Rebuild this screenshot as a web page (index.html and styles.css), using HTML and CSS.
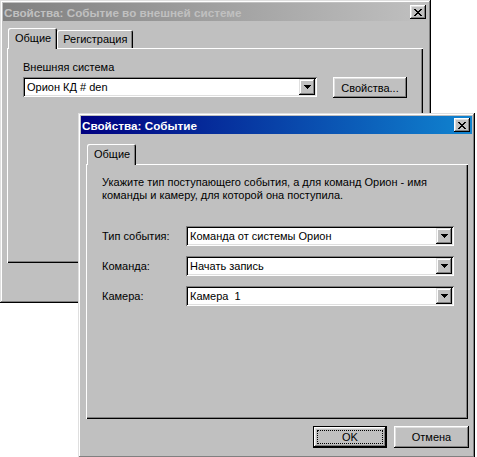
FILE: index.html
```html
<!DOCTYPE html>
<html lang="ru">
<head>
<meta charset="utf-8">
<title>Свойства: Событие</title>
<link rel="stylesheet" href="styles.css">
</head>
<body>
<div class="desktop">
  <div class="win win-back">
    <div class="titlebar inactive">
      <span class="title">Свойства: Событие во внешней системе</span>
      <span class="close"><svg width="8" height="7" viewBox="0 0 8 7" shape-rendering="crispEdges"><path d="M0 0h2v1h-2zM6 0h2v1h-2zM1 1h2v1h-2zM5 1h2v1h-2zM2 2h4v1h-4zM3 3h2v1h-2zM2 4h4v1h-4zM1 5h2v1h-2zM5 5h2v1h-2zM0 6h2v1h-2zM6 6h2v1h-2z" fill="#000"/></svg></span>
    </div>
    <div class="body back-body">
      <div class="tabs">
        <div class="tab sel">Общие</div>
        <div class="tab">Регистрация</div>
      </div>
      <div class="panel back-panel">
        <div class="lbl">Внешняя система</div>
        <div class="back-row">
          <div class="combo back-combo">
            <span class="val">Орион КД # den</span>
            <span class="arrow"><svg width="7" height="4" viewBox="0 0 7 4" shape-rendering="crispEdges"><path d="M0 0h7v1h-7zM1 1h5v1h-5zM2 2h3v1h-3zM3 3h1v1h-1z" fill="#000"/></svg></span>
          </div>
          <div class="btn props">Свойства...</div>
        </div>
      </div>
    </div>
  </div>

  <div class="win win-front">
    <div class="titlebar active">
      <span class="title">Свойства: Событие</span>
      <span class="close"><svg width="8" height="7" viewBox="0 0 8 7" shape-rendering="crispEdges"><path d="M0 0h2v1h-2zM6 0h2v1h-2zM1 1h2v1h-2zM5 1h2v1h-2zM2 2h4v1h-4zM3 3h2v1h-2zM2 4h4v1h-4zM1 5h2v1h-2zM5 5h2v1h-2zM0 6h2v1h-2zM6 6h2v1h-2z" fill="#000"/></svg></span>
    </div>
    <div class="body front-body">
      <div class="tabs front-tabs">
        <div class="tab sel">Общие</div>
      </div>
      <div class="panel front-panel">
        <p class="hint">Укажите тип поступающего события, а для команд Орион - имя<br>команды и камеру, для которой она поступила.</p>
        <div class="form">
          <div class="frow">
            <span class="flbl">Тип события:</span>
            <div class="combo fcombo">
              <span class="val">Команда от системы Орион</span>
              <span class="arrow"><svg width="7" height="4" viewBox="0 0 7 4" shape-rendering="crispEdges"><path d="M0 0h7v1h-7zM1 1h5v1h-5zM2 2h3v1h-3zM3 3h1v1h-1z" fill="#000"/></svg></span>
            </div>
          </div>
          <div class="frow">
            <span class="flbl">Команда:</span>
            <div class="combo fcombo">
              <span class="val">Начать запись</span>
              <span class="arrow"><svg width="7" height="4" viewBox="0 0 7 4" shape-rendering="crispEdges"><path d="M0 0h7v1h-7zM1 1h5v1h-5zM2 2h3v1h-3zM3 3h1v1h-1z" fill="#000"/></svg></span>
            </div>
          </div>
          <div class="frow">
            <span class="flbl">Камера:</span>
            <div class="combo fcombo">
              <span class="val">Камера&nbsp; 1</span>
              <span class="arrow"><svg width="7" height="4" viewBox="0 0 7 4" shape-rendering="crispEdges"><path d="M0 0h7v1h-7zM1 1h5v1h-5zM2 2h3v1h-3zM3 3h1v1h-1z" fill="#000"/></svg></span>
            </div>
          </div>
        </div>
      </div>
      <div class="buttons">
        <div class="btn default"><span class="focus">OK</span></div>
        <div class="btn cancel">Отмена</div>
      </div>
    </div>
  </div>
</div>
</body>
</html>
```

FILE: styles.css
```css
html, body {
  margin: 0;
  padding: 0;
  background: #fff;
}

.desktop {
  position: relative;
  width: 477px;
  height: 457px;
  overflow: hidden;
  background: #fff;
  font-family: "Liberation Sans", Arial, sans-serif;
  font-size: 11px;
  color: #000;
}

.win {
  position: absolute;
  box-sizing: border-box;
  padding: 3px;
  background: #c0c0c0;
  box-shadow: inset -1px -1px #000, inset 1px 1px #dfdfdf, inset -2px -2px #808080, inset 2px 2px #fff;
}

.win-back {
  left: 0;
  top: 0;
  width: 431px;
  height: 303px;
}

.win-front {
  left: 78px;
  top: 113px;
  width: 397px;
  height: 345px;
}

.titlebar {
  display: flex;
  align-items: center;
  height: 18px;
  padding: 0 2px 0 1px;
  font-weight: bold;
  font-size: 11.7px;
  white-space: nowrap;
}

.titlebar.active {
  background: linear-gradient(to right, #000080, #1084d0);
  color: #fff;
}

.titlebar.inactive {
  background: linear-gradient(to right, #808080, #c0c0c0);
  color: #c0c0c0;
}

.title {
  padding-left: 0;
}

.close {
  margin-left: auto;
  width: 16px;
  height: 14px;
  box-sizing: border-box;
  background: #c0c0c0;
  display: flex;
  align-items: center;
  justify-content: center;
  box-shadow: inset -1px -1px #000, inset 1px 1px #fff, inset -2px -2px #808080, inset 2px 2px #dfdfdf;
}

.close svg {
  display: block;
  margin-left: -1px;
}

.back-body {
  padding: 7px 0 0 4px;
}

.front-body {
  padding: 10px 0 0 5px;
}

.tabs {
  display: flex;
  align-items: flex-end;
  margin-left: 1px;
  margin-bottom: -1px;
  position: relative;
  z-index: 1;
  height: 21px;
}

.tab {
  box-sizing: border-box;
  height: 18px;
  margin-bottom: 1px;
  padding: 2px 6px 0 6px;
  line-height: 14px;
  background: #c0c0c0;
  border-radius: 2px 2px 0 0;
  box-shadow: inset 1px 1px #fff, inset -1px 0 #000, inset -2px 0 #808080;
}

.tab.sel {
  height: 21px;
  margin-bottom: 0;
  padding-top: 3px;
  padding-left: 7px;
  padding-right: 6px;
}

.panel {
  box-sizing: border-box;
  background: #c0c0c0;
  box-shadow: inset 1px 1px #fff, inset -1px -1px #000, inset -2px -2px #808080;
}

.back-panel {
  width: 416px;
  height: 215px;
  padding: 13px 0 0 16px;
}

.lbl {
  line-height: 13px;
  margin-bottom: 3px;
}

.back-row {
  display: flex;
  align-items: flex-start;
  gap: 16px;
}

.combo {
  display: flex;
  align-items: center;
  box-sizing: border-box;
  height: 20px;
  padding: 2px;
  background: #fff;
  box-shadow: inset 1px 1px #808080, inset -1px -1px #fff, inset 2px 2px #000, inset -2px -2px #dfdfdf;
}

.combo .val {
  flex: 1;
  padding-left: 2px;
  line-height: 16px;
  white-space: nowrap;
  overflow: hidden;
}

.combo .arrow {
  width: 16px;
  height: 16px;
  box-sizing: border-box;
  background: #c0c0c0;
  display: flex;
  align-items: center;
  justify-content: center;
  box-shadow: inset -1px -1px #000, inset 1px 1px #dfdfdf, inset -2px -2px #808080, inset 2px 2px #fff;
}

.combo .arrow svg {
  display: block;
}

.back-combo {
  width: 294px;
}

.btn {
  box-sizing: border-box;
  height: 21px;
  display: flex;
  align-items: center;
  justify-content: center;
  background: #c0c0c0;
  box-shadow: inset -1px -1px #000, inset 1px 1px #fff, inset -2px -2px #808080, inset 2px 2px #dfdfdf;
  white-space: nowrap;
}

.props {
  width: 74px;
}

.front-panel {
  width: 382px;
  height: 255px;
  padding: 12px 0 0 16px;
}

.hint {
  margin: 0;
  line-height: 13px;
}

.form {
  margin-top: 24px;
  display: flex;
  flex-direction: column;
  gap: 10px;
}

.frow {
  display: flex;
  align-items: center;
}

.flbl {
  width: 84px;
  line-height: 20px;
}

.fcombo {
  width: 268px;
}

.buttons {
  display: flex;
  justify-content: flex-end;
  gap: 7px;
  margin-top: 7px;
  width: 383px;
}

.btn.default {
  width: 74px;
  height: 22px;
  padding: 4px;
  box-shadow: inset 0 0 0 1px #000, inset -2px -2px #000, inset 2px 2px #fff, inset -3px -3px #808080, inset 3px 3px #dfdfdf;
}

.focus {
  flex: 1;
  align-self: stretch;
  display: flex;
  align-items: center;
  justify-content: center;
  border: 1px dotted #000;
}

.btn.cancel {
  width: 75px;
  height: 22px;
}
```
